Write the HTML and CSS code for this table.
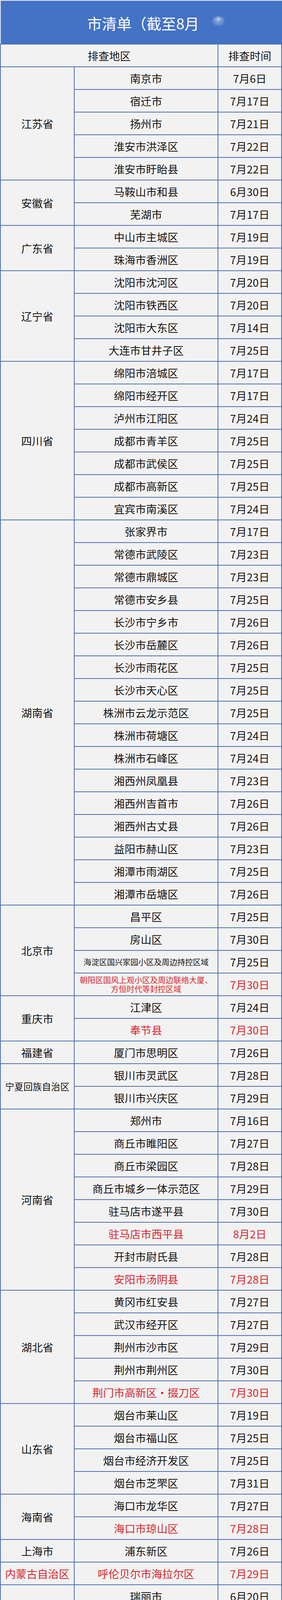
FILE: index.html
```html
<!DOCTYPE html>
<html lang="zh-CN">
<head>
<meta charset="utf-8">
<title>排查地区清单</title>
<link rel="stylesheet" href="styles.css">
</head>
<body>
<div class="page">
  <header class="banner">
    <h1 class="title">市清单（截至8月</h1>
    <span class="mark"></span>
  </header>
  <main class="sheet">
    <div class="cell hd-area">排查地区</div>
    <div class="cell hd-time">排查时间</div>

    <div class="cell prov r5">江苏省</div>
    <div class="cell dist">南京市</div><div class="cell date">7月6日</div>
    <div class="cell dist">宿迁市</div><div class="cell date">7月17日</div>
    <div class="cell dist">扬州市</div><div class="cell date">7月21日</div>
    <div class="cell dist">淮安市洪泽区</div><div class="cell date">7月22日</div>
    <div class="cell dist">淮安市盱眙县</div><div class="cell date">7月22日</div>

    <div class="cell prov r2">安徽省</div>
    <div class="cell dist">马鞍山市和县</div><div class="cell date">6月30日</div>
    <div class="cell dist">芜湖市</div><div class="cell date">7月17日</div>

    <div class="cell prov r2">广东省</div>
    <div class="cell dist">中山市主城区</div><div class="cell date">7月19日</div>
    <div class="cell dist">珠海市香洲区</div><div class="cell date">7月19日</div>

    <div class="cell prov r4">辽宁省</div>
    <div class="cell dist">沈阳市沈河区</div><div class="cell date">7月20日</div>
    <div class="cell dist">沈阳市铁西区</div><div class="cell date">7月20日</div>
    <div class="cell dist">沈阳市大东区</div><div class="cell date">7月14日</div>
    <div class="cell dist">大连市甘井子区</div><div class="cell date">7月25日</div>

    <div class="cell prov r7">四川省</div>
    <div class="cell dist">绵阳市涪城区</div><div class="cell date">7月17日</div>
    <div class="cell dist">绵阳市经开区</div><div class="cell date">7月17日</div>
    <div class="cell dist">泸州市江阳区</div><div class="cell date">7月24日</div>
    <div class="cell dist">成都市青羊区</div><div class="cell date">7月25日</div>
    <div class="cell dist">成都市武侯区</div><div class="cell date">7月25日</div>
    <div class="cell dist">成都市高新区</div><div class="cell date">7月25日</div>
    <div class="cell dist">宜宾市南溪区</div><div class="cell date">7月24日</div>

    <div class="cell prov r17">湖南省</div>
    <div class="cell dist">张家界市</div><div class="cell date">7月17日</div>
    <div class="cell dist">常德市武陵区</div><div class="cell date">7月23日</div>
    <div class="cell dist">常德市鼎城区</div><div class="cell date">7月23日</div>
    <div class="cell dist">常德市安乡县</div><div class="cell date">7月25日</div>
    <div class="cell dist">长沙市宁乡市</div><div class="cell date">7月26日</div>
    <div class="cell dist">长沙市岳麓区</div><div class="cell date">7月26日</div>
    <div class="cell dist">长沙市雨花区</div><div class="cell date">7月25日</div>
    <div class="cell dist">长沙市天心区</div><div class="cell date">7月25日</div>
    <div class="cell dist">株洲市云龙示范区</div><div class="cell date">7月25日</div>
    <div class="cell dist">株洲市荷塘区</div><div class="cell date">7月24日</div>
    <div class="cell dist">株洲市石峰区</div><div class="cell date">7月24日</div>
    <div class="cell dist">湘西州凤凰县</div><div class="cell date">7月23日</div>
    <div class="cell dist">湘西州吉首市</div><div class="cell date">7月26日</div>
    <div class="cell dist">湘西州古丈县</div><div class="cell date">7月26日</div>
    <div class="cell dist">益阳市赫山区</div><div class="cell date">7月23日</div>
    <div class="cell dist">湘潭市雨湖区</div><div class="cell date">7月25日</div>
    <div class="cell dist">湘潭市岳塘区</div><div class="cell date">7月26日</div>

    <div class="cell prov r4">北京市</div>
    <div class="cell dist">昌平区</div><div class="cell date">7月25日</div>
    <div class="cell dist">房山区</div><div class="cell date">7月30日</div>
    <div class="cell dist small">海淀区国兴家园小区及周边持控区域</div><div class="cell date">7月25日</div>
    <div class="cell dist small red">朝阳区国风上观小区及周边联络大厦、<br>方恒时代等封控区域</div><div class="cell date red">7月30日</div>

    <div class="cell prov r2">重庆市</div>
    <div class="cell dist">江津区</div><div class="cell date">7月24日</div>
    <div class="cell dist red">奉节县</div><div class="cell date red">7月30日</div>

    <div class="cell prov r1">福建省</div>
    <div class="cell dist">厦门市思明区</div><div class="cell date">7月26日</div>

    <div class="cell prov r2 narrow">宁夏回族自治区</div>
    <div class="cell dist">银川市灵武区</div><div class="cell date">7月28日</div>
    <div class="cell dist">银川市兴庆区</div><div class="cell date">7月29日</div>

    <div class="cell prov r8">河南省</div>
    <div class="cell dist">郑州市</div><div class="cell date">7月16日</div>
    <div class="cell dist">商丘市睢阳区</div><div class="cell date">7月27日</div>
    <div class="cell dist">商丘市梁园区</div><div class="cell date">7月28日</div>
    <div class="cell dist">商丘市城乡一体示范区</div><div class="cell date">7月29日</div>
    <div class="cell dist">驻马店市遂平县</div><div class="cell date">7月30日</div>
    <div class="cell dist red">驻马店市西平县</div><div class="cell date red">8月2日</div>
    <div class="cell dist">开封市尉氏县</div><div class="cell date">7月28日</div>
    <div class="cell dist red">安阳市汤阴县</div><div class="cell date red">7月28日</div>

    <div class="cell prov r5">湖北省</div>
    <div class="cell dist">黄冈市红安县</div><div class="cell date">7月27日</div>
    <div class="cell dist">武汉市经开区</div><div class="cell date">7月27日</div>
    <div class="cell dist">荆州市沙市区</div><div class="cell date">7月29日</div>
    <div class="cell dist">荆州市荆州区</div><div class="cell date">7月30日</div>
    <div class="cell dist red">荆门市高新区・掇刀区</div><div class="cell date red">7月30日</div>

    <div class="cell prov r4">山东省</div>
    <div class="cell dist">烟台市莱山区</div><div class="cell date">7月19日</div>
    <div class="cell dist">烟台市福山区</div><div class="cell date">7月25日</div>
    <div class="cell dist">烟台市经济开发区</div><div class="cell date">7月25日</div>
    <div class="cell dist">烟台市芝罘区</div><div class="cell date">7月31日</div>

    <div class="cell prov r2">海南省</div>
    <div class="cell dist">海口市龙华区</div><div class="cell date">7月27日</div>
    <div class="cell dist red">海口市琼山区</div><div class="cell date red">7月28日</div>

    <div class="cell prov r1">上海市</div>
    <div class="cell dist">浦东新区</div><div class="cell date">7月26日</div>

    <div class="cell prov r1 red">内蒙古自治区</div>
    <div class="cell dist red">呼伦贝尔市海拉尔区</div><div class="cell date red">7月29日</div>

    <div class="cell prov r2">云南省</div>
    <div class="cell dist">瑞丽市</div><div class="cell date">6月20日</div>
    <div class="cell dist">陇川县</div><div class="cell date">6月30日</div>
  </main>
</div>
</body>
</html>
```

FILE: styles.css
```css
* {
  box-sizing: border-box;
}

html, body {
  margin: 0;
  padding: 0;
  background: #ffffff;
}

body {
  font-family: "Noto Sans CJK SC", "Noto Sans", "Liberation Sans", sans-serif;
  color: #141414;
}

.page {
  width: 100%;
}

.banner {
  position: relative;
  height: 112px;
  background: #4472c4;
  border-top: 2px solid #e3e8f1;
  border-left: 2px solid #e3e8f1;
  display: flex;
  align-items: center;
  padding-left: 221px;
  padding-top: 4px;
}

.title {
  margin: 0;
  white-space: nowrap;
  font-size: 38px;
  font-weight: 400;
  line-height: 48px;
  color: #ffffff;
}

.mark {
  position: absolute;
  left: 541px;
  top: 40px;
  width: 32px;
  height: 24px;
  border-radius: 50% 50% 45% 45%;
  background: radial-gradient(ellipse at 50% 30%, rgba(255,255,255,0.75) 0, rgba(255,255,255,0.35) 25%, rgba(255,255,255,0.12) 70%, rgba(255,255,255,0) 100%);
  filter: blur(1.5px);
}

.sheet {
  display: grid;
  grid-template-columns: 187px 1fr 161px;
  grid-template-rows: repeat(70, 56px);
  gap: 2px;
  padding: 2px 2px 1px;
  background: #4d70b3;
}

.cell {
  background: #f2f2f2;
  display: flex;
  align-items: center;
  justify-content: center;
  text-align: center;
  font-size: 27.5px;
  line-height: 1.2;
  white-space: nowrap;
}

.hd-area {
  grid-column: 1 / 3;
}

.hd-time {
  grid-column: 3;
}

.prov {
  grid-column: 1;
}

.dist {
  grid-column: 2;
}

.date {
  grid-column: 3;
}

.r1 { grid-row: span 1; }
.r2 { grid-row: span 2; }
.r4 { grid-row: span 4; }
.r5 { grid-row: span 5; }
.r7 { grid-row: span 7; }
.r8 { grid-row: span 8; }
.r17 { grid-row: span 17; }

.narrow {
  font-size: 23.5px;
}

.small {
  font-size: 20px;
  line-height: 23px;
}

.red {
  color: #d6262c;
}
```
